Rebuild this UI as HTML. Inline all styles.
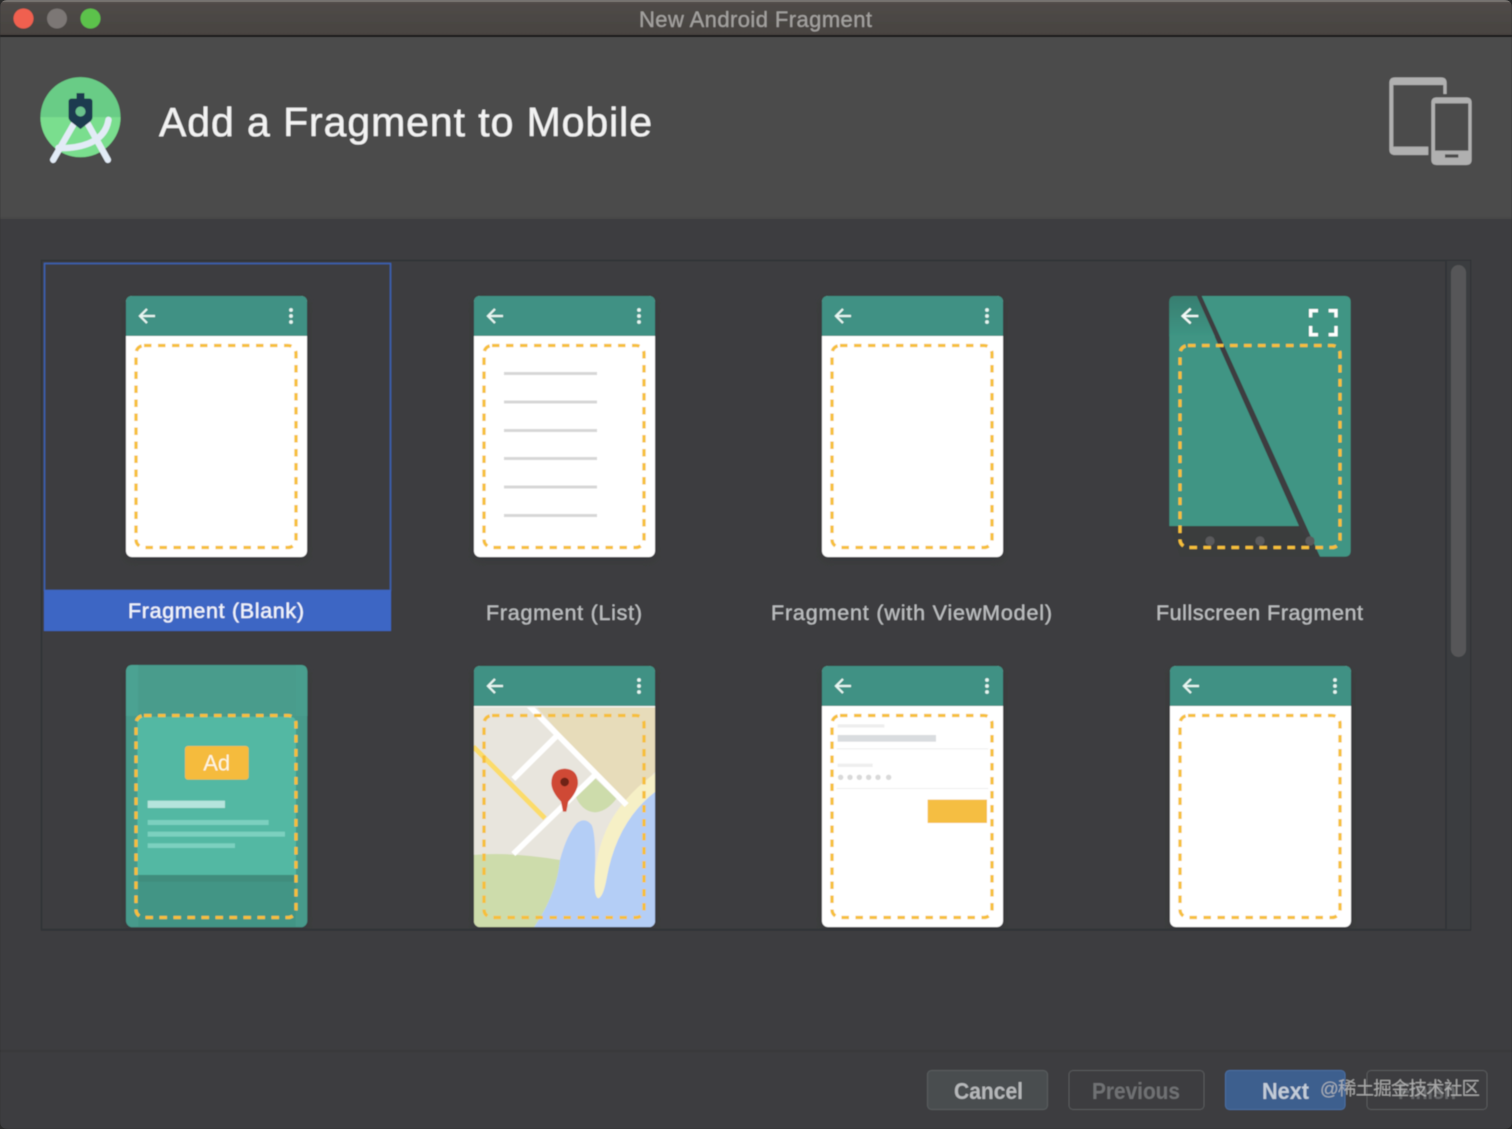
<!DOCTYPE html>
<html><head><meta charset="utf-8"><title>New Android Fragment</title>
<style>html,body{margin:0;padding:0;background:#2b2b2b;width:1512px;height:1129px;overflow:hidden}svg{display:block}text{font-family:"Liberation Sans","Noto Sans CJK SC",sans-serif}</style></head>
<body>
<svg width="1512" height="1129" viewBox="0 0 1512 1129" xmlns="http://www.w3.org/2000/svg">
<defs>
<filter id="soft" x="0" y="0" width="100%" height="100%"><feGaussianBlur stdDeviation="0.55"/></filter>
<filter id="sh" x="-20%" y="-20%" width="140%" height="140%"><feGaussianBlur stdDeviation="5"/></filter>
<clipPath id="win"><path d="M8 0H1504Q1512 0 1512 8V1121Q1512 1129 1504 1129H8Q0 1129 0 1121V8Q0 0 8 0Z"/></clipPath>
<clipPath id="cardclip"><rect x="0" y="0" width="181" height="261" rx="6"/></clipPath>
<linearGradient id="tb" x1="0" y1="0" x2="0" y2="1"><stop offset="0" stop-color="#5a5552"/><stop offset=".12" stop-color="#4f4a47"/><stop offset="1" stop-color="#474341"/></linearGradient>
<linearGradient id="fsg" x1="0" y1="0" x2="0" y2="1"><stop offset="0" stop-color="#377e70"/><stop offset="1" stop-color="#3f9584"/></linearGradient>
<g id="shadow"><rect x="-2" y="2" width="185" height="264" rx="8" fill="#2e2f30" opacity=".35" filter="url(#sh)"/></g>
<g id="dash"><rect x="10" y="49.500" width="160" height="202" rx="8" fill="none" stroke="#f6bf3a" stroke-width="3.300" stroke-dasharray="7.500 6.500"/></g>
<g id="hdr">
<path d="M0 40V6Q0 0 6 0H175Q181 0 181 6V40Z" fill="#409184"/>
<path d="M29 20H15M21 13L14 20L21 27" fill="none" stroke="#e6f5f1" stroke-width="2.200"/>
<circle cx="165" cy="14" r="1.900" fill="#e6f5f1"/><circle cx="165" cy="20" r="1.900" fill="#e6f5f1"/><circle cx="165" cy="26" r="1.900" fill="#e6f5f1"/>
</g>
<g id="blank">
<use href="#shadow"/>
<rect width="181" height="261" rx="6" fill="#fff"/>
<use href="#hdr"/>
<use href="#dash"/>
</g>
</defs>
<g clip-path="url(#win)"><g filter="url(#soft)">
<rect width="1512" height="1129" fill="#3c3d3f"/>
<rect width="1512" height="36" fill="url(#tb)"/>
<rect y="0" width="1512" height="1.500" fill="#8c8885"/>
<rect y="35" width="1512" height="2" fill="#141414"/>
<rect y="37" width="1512" height="182" fill="#4b4b4b"/>
<rect y="217" width="1512" height="2" fill="#464646"/>
<circle cx="23.500" cy="18.500" r="10" fill="#f0604f"/>
<circle cx="57" cy="18.500" r="10" fill="#7b7775"/>
<circle cx="90.500" cy="18.500" r="10" fill="#5bc24c"/>
<text x="639" y="27" font-size="22" fill="#a3a19f" stroke="#a3a19f" stroke-width=".2" textLength="233" lengthAdjust="spacing">New Android Fragment</text>

<!-- logo -->
<g transform="translate(30.500 70.500) scale(.3333)">
<circle cx="150" cy="140" r="120" fill="#69cc86"/>
<path d="M30 140a120 120 0 0 0 240 0Z" fill="#7ade8e"/>
<g fill="none" stroke="#e2ebf6" stroke-linecap="round">
<path d="M137 148L68 268" stroke-width="19"/>
<path d="M165 148L232 268" stroke-width="19"/>
<path d="M234 148Q222 222 116 232Q90 234 84 232" stroke-width="19"/>
</g>
<path d="M138 68H162V84H176Q186 84 186 94V140Q186 148 178 154L150 176L122 154Q114 148 114 140V94Q114 84 124 84H138Z" fill="#1f3a4f"/>
<circle cx="150" cy="123" r="15" fill="#69c28c"/>
</g>
<text x="159" y="136" font-size="41" fill="#f2f2f2" stroke="#f2f2f2" stroke-width=".35" textLength="493" lengthAdjust="spacing">Add a Fragment to Mobile</text>

<!-- device icon -->
<g transform="translate(1340 50) scale(.3333)">
<path d="M265 315H165Q148 315 148 298V99Q148 82 165 82H303Q320 82 320 99V132H310V105H160V290H265Z" fill="#b0b0b0"/>
<path fill-rule="evenodd" d="M290 142H379Q395 142 395 158V329Q395 345 379 345H290Q274 345 274 329V158Q274 142 290 142ZM285 160V302H385V160ZM315 313V323H355V313Z" fill="#b0b0b0"/>
</g>

<!-- panel -->
<rect x="41.500" y="260.500" width="1429" height="669" fill="#3d3e40" stroke="#333537" stroke-width="2"/>
<rect x="1447" y="261" width="23" height="668" fill="#3b3d3f"/>
<rect x="1445" y="261" width="2" height="668" fill="#333537"/>
<rect x="1451" y="265" width="15" height="392" rx="7.500" fill="#565759"/>

<!-- selection -->
<rect x="44.500" y="263.500" width="346" height="327" fill="none" stroke="#3a63b8" stroke-width="1.500"/>
<rect x="44" y="590" width="347" height="41" fill="#3d66c4"/>

<!-- row 1 -->
<use href="#blank" x="126" y="296"/>
<use href="#blank" x="474" y="296"/>
<g stroke="#d6d6d6" stroke-width="3"><path d="M504 373.500H597M504 402H597M504 430.500H597M504 458.500H597M504 487H597M504 515.500H597"/></g>
<use href="#blank" x="822" y="296"/>

<!-- fullscreen -->
<g transform="translate(1150 280) scale(.3333)">
<path d="M58 738H447L140 48H76Q58 48 58 66Z" fill="#3f9584"/>
<path d="M58 170V66Q58 48 76 48H140L195 170Z" fill="url(#fsg)"/>
<path d="M155 48H584Q602 48 602 66V812Q602 830 584 830H510Z" fill="#3f9584"/>
<path d="M58 738H447L510 830H90Z" fill="#3b3c3e"/>
<circle cx="180" cy="783" r="14" fill="#5a5a5c"/><circle cx="330" cy="783" r="14" fill="#5a5a5c"/><circle cx="480" cy="783" r="14" fill="#5a5a5c"/>
<path d="M145 108H100M122 86L98 108L122 130" fill="none" stroke="#f2f9f7" stroke-width="7"/>
<path d="M504 92H482V112M536 92H558V112M482 138V164H504M558 138V164H536" fill="none" stroke="#fff" stroke-width="10"/>
</g>
<use href="#dash" x="1170" y="296"/>

<!-- labels row 1 -->
<text x="128" y="618" font-size="21.500" fill="#f0f3fa" stroke="#f0f3fa" stroke-width=".35" textLength="176" lengthAdjust="spacing">Fragment (Blank)</text>
<text x="486" y="620" font-size="21.500" fill="#bcbec0" stroke="#bcbec0" stroke-width=".2" textLength="156" lengthAdjust="spacing">Fragment (List)</text>
<text x="771" y="620" font-size="21.500" fill="#bcbec0" stroke="#bcbec0" stroke-width=".2" textLength="281" lengthAdjust="spacing">Fragment (with ViewModel)</text>
<text x="1156" y="620" font-size="21.500" fill="#bcbec0" stroke="#bcbec0" stroke-width=".2" textLength="207" lengthAdjust="spacing">Fullscreen Fragment</text>

<!-- row 2: Ad -->
<use href="#shadow" x="126" y="666"/>
<g transform="translate(110 655) scale(.3333)">
<rect x="48" y="30" width="544" height="787" rx="20" fill="#469a8b"/>
<path d="M68 30H85V183H48V50Q48 30 68 30Z" fill="#4ca292"/>
<path d="M572 30H557V183H592V50Q592 30 572 30Z" fill="#489e8e"/>
<rect x="85" y="33" width="472" height="150" fill="#4a9c8c"/>
<path d="M82 660V205Q82 185 102 185H538Q558 185 558 205V660Z" fill="#52b8a3"/>
<rect x="85" y="660" width="472" height="155" fill="#439585"/>
<rect x="85" y="660" width="472" height="20" fill="#3f8d7d"/>
<rect x="225" y="273" width="191" height="101" rx="9" fill="#f5bb3e"/>
<rect x="113" y="437" width="232" height="22" fill="#b5e4dc"/>
<rect x="113" y="495" width="363" height="15" fill="#7bd0bf"/>
<rect x="113" y="530" width="412" height="15" fill="#7bd0bf"/>
<rect x="113" y="565" width="262" height="14" fill="#7bd0bf"/>
<text x="320" y="346" font-size="66" fill="#fdf6e4" text-anchor="middle">Ad</text>
</g>
<use href="#dash" x="126" y="666"/>

<!-- row 2: Map -->
<use href="#shadow" x="474" y="666"/>
<g transform="translate(474 666)" clip-path="url(#cardclip)">
<g transform="translate(-14 -11) scale(.3333)">
<rect x="40" y="30" width="546" height="790" fill="#e8e5dd"/>
<path d="M225 150H586V350L500 440L400 350Z" fill="#e7dcba"/>
<path d="M345 420L400 365L470 430Q440 470 405 472Q365 470 345 420Z" fill="#cddcab"/>
<path d="M40 600Q150 590 300 615Q290 720 220 820H40Z" fill="#cddcab"/>
<path d="M586 410V820H220Q290 720 300 615Q320 540 350 505Q375 485 395 510Q408 540 405 650Q400 725 415 730Q430 725 440 670Q470 500 586 410Z" fill="#b4cef6"/>
<path d="M586 355V410Q470 500 440 670Q430 725 415 730Q400 725 405 650Q420 540 470 470Q520 400 586 355Z" fill="#f6f0c6"/>
<g fill="none" stroke="#fff" stroke-width="17">
<path d="M205 150L500 450"/><path d="M160 372L288 245"/><path d="M160 597L405 360"/>
</g>
<path d="M40 275L255 490" fill="none" stroke="#fbdc6b" stroke-width="15"/>
<path d="M314 341Q354 343 354 385Q352 410 325 440L319 470H309L303 440Q275 410 274 385Q274 343 314 341Z" fill="#cf4a36"/>
<circle cx="314" cy="381" r="13" fill="#6e2318"/>
</g>
</g>
<use href="#hdr" x="474" y="666"/>
<rect x="474" y="706" width="181" height="1.500" fill="#f4f4f0"/>
<use href="#dash" x="474" y="666"/>

<!-- row 2: Login -->
<use href="#shadow" x="822" y="666"/>
<rect x="822" y="666" width="181" height="261" rx="6" fill="#fff"/>
<use href="#hdr" x="822" y="666"/>
<g transform="translate(810 655) scale(.3333)">
<rect x="83" y="208" width="140" height="10" fill="#eee"/>
<rect x="83" y="240" width="295" height="20" fill="#d9dcdf"/>
<rect x="80" y="280" width="455" height="3" fill="#eeeeee"/>
<rect x="83" y="326" width="105" height="10" fill="#eee"/>
<g fill="#d9d9d9"><circle cx="92" cy="367" r="8"/><circle cx="120" cy="367" r="8"/><circle cx="148" cy="367" r="8"/><circle cx="176" cy="367" r="8"/><circle cx="204" cy="367" r="8"/><circle cx="236" cy="367" r="8"/></g>
<rect x="80" y="399" width="455" height="3" fill="#eeeeee"/>
<rect x="353" y="434" width="178" height="70" fill="#f5be42"/>
</g>
<use href="#dash" x="822" y="666"/>

<!-- row 2: blank -->
<use href="#blank" x="1170" y="666"/>

<rect x="0" y="931" width="1512" height="198" fill="#3c3d3f"/>
<rect x="41" y="929" width="1430" height="2" fill="#333537"/>
<rect x="0" y="1050" width="1512" height="2" fill="#38393b"/>

<!-- buttons -->
<rect x="927.500" y="1070.500" width="120" height="39" rx="4" fill="#4a4e50" stroke="#5a5e60"/>
<text x="954" y="1099" font-size="23" font-weight="700" fill="#b6b8ba" textLength="69" lengthAdjust="spacingAndGlyphs">Cancel</text>
<rect x="1069" y="1070.500" width="135" height="39" rx="4" fill="#3c3d3f" stroke="#5a5c5e"/>
<text x="1092" y="1099" font-size="23" font-weight="700" fill="#6f7173" textLength="88" lengthAdjust="spacingAndGlyphs">Previous</text>
<rect x="1225.500" y="1070.500" width="119.500" height="39" rx="4" fill="#3e5f8e" stroke="#4b6fa3"/>
<text x="1262" y="1099" font-size="23" font-weight="700" fill="#c3ccd8" textLength="47" lengthAdjust="spacingAndGlyphs">Next</text>
<rect x="1367" y="1070.500" width="120" height="39" rx="4" fill="#3c3d3f" stroke="#5a5c5e"/>
<text x="1398" y="1099" font-size="23" font-weight="700" fill="#66686a" textLength="58" lengthAdjust="spacingAndGlyphs">Finish</text>
<text x="1320" y="1095" font-size="18.500" fill="#c2c2c2" fill-opacity=".8" textLength="160">@稀土掘金技术社区</text>
</g></g>
</svg>
</body></html>
